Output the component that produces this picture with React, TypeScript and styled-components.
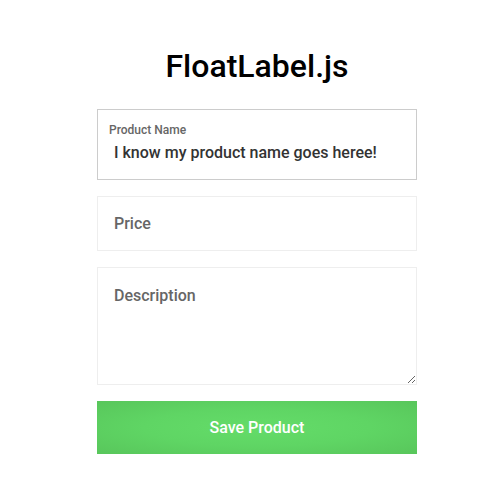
import React, { useState } from 'react';
import styled, { createGlobalStyle } from 'styled-components';

const GlobalStyle = createGlobalStyle`
  html, body {
    margin: 0;
    padding: 0;
    background: #fff;
    font-family: Roboto, 'Liberation Sans', sans-serif;
  }
`;

const Page = styled.div`
  display: flex;
  flex-direction: column;
  align-items: center;
  padding: 46px 0 0 14px;
`;

const Title = styled.h1`
  margin: 0 0 23px;
  font-size: 32px;
  font-weight: 500;
  color: #000;
  line-height: 40px;
`;

const Form = styled.form`
  width: 320px;
  display: flex;
  flex-direction: column;
  gap: 16px;
`;

const Field = styled.div<{ $active?: boolean; $height: number }>`
  position: relative;
  box-sizing: border-box;
  height: ${(p) => p.$height}px;
  border: 1px solid ${(p) => (p.$active ? '#ccc' : '#eee')};
  background: #fff;
`;

const FloatingLabel = styled.label`
  position: absolute;
  left: 11px;
  top: 13px;
  font-size: 12px;
  font-weight: 500;
  color: #666;
  line-height: 14px;
  pointer-events: none;
`;

const TextInput = styled.input<{ $floated?: boolean }>`
  box-sizing: border-box;
  width: 100%;
  height: 100%;
  border: none;
  outline: none;
  background: transparent;
  padding: ${(p) => (p.$floated ? '16px 16px 0' : '0 16px')};
  font-family: Roboto, 'Liberation Sans', sans-serif;
  font-size: 16px;
  font-weight: 500;
  color: #333;
  caret-color: #000;

  &::placeholder {
    color: #666;
  }
`;

const TextArea = styled.textarea`
  box-sizing: border-box;
  display: block;
  width: 100%;
  height: 100%;
  border: none;
  outline: none;
  padding: 18px 16px;
  font-family: Roboto, 'Liberation Sans', sans-serif;
  font-size: 16px;
  font-weight: 500;
  color: #333;

  &::placeholder {
    color: #666;
  }
`;

const SaveButton = styled.button`
  height: 53px;
  border: none;
  cursor: pointer;
  background: radial-gradient(ellipse at center, #64dc69 0%, #5fd564 50%, #58c65b 100%);
  color: #fff;
  font-family: Roboto, 'Liberation Sans', sans-serif;
  font-size: 16px;
  font-weight: 500;
`;

export default function App() {
  const [name, setName] = useState('I know my product name goes heree!');

  return (
    <>
      <GlobalStyle />
      <Page>
        <Title>FloatLabel.js</Title>
        <Form onSubmit={(e) => e.preventDefault()}>
          <Field $active $height={71}>
            <FloatingLabel htmlFor="name">Product Name</FloatingLabel>
            <TextInput
              id="name"
              $floated
              autoFocus
              value={name}
              onChange={(e) => setName(e.target.value)}
            />
          </Field>
          <Field $height={55}>
            <TextInput placeholder="Price" />
          </Field>
          <Field $height={118}>
            <TextArea placeholder="Description" />
          </Field>
          <SaveButton type="submit">Save Product</SaveButton>
        </Form>
      </Page>
    </>
  );
}
